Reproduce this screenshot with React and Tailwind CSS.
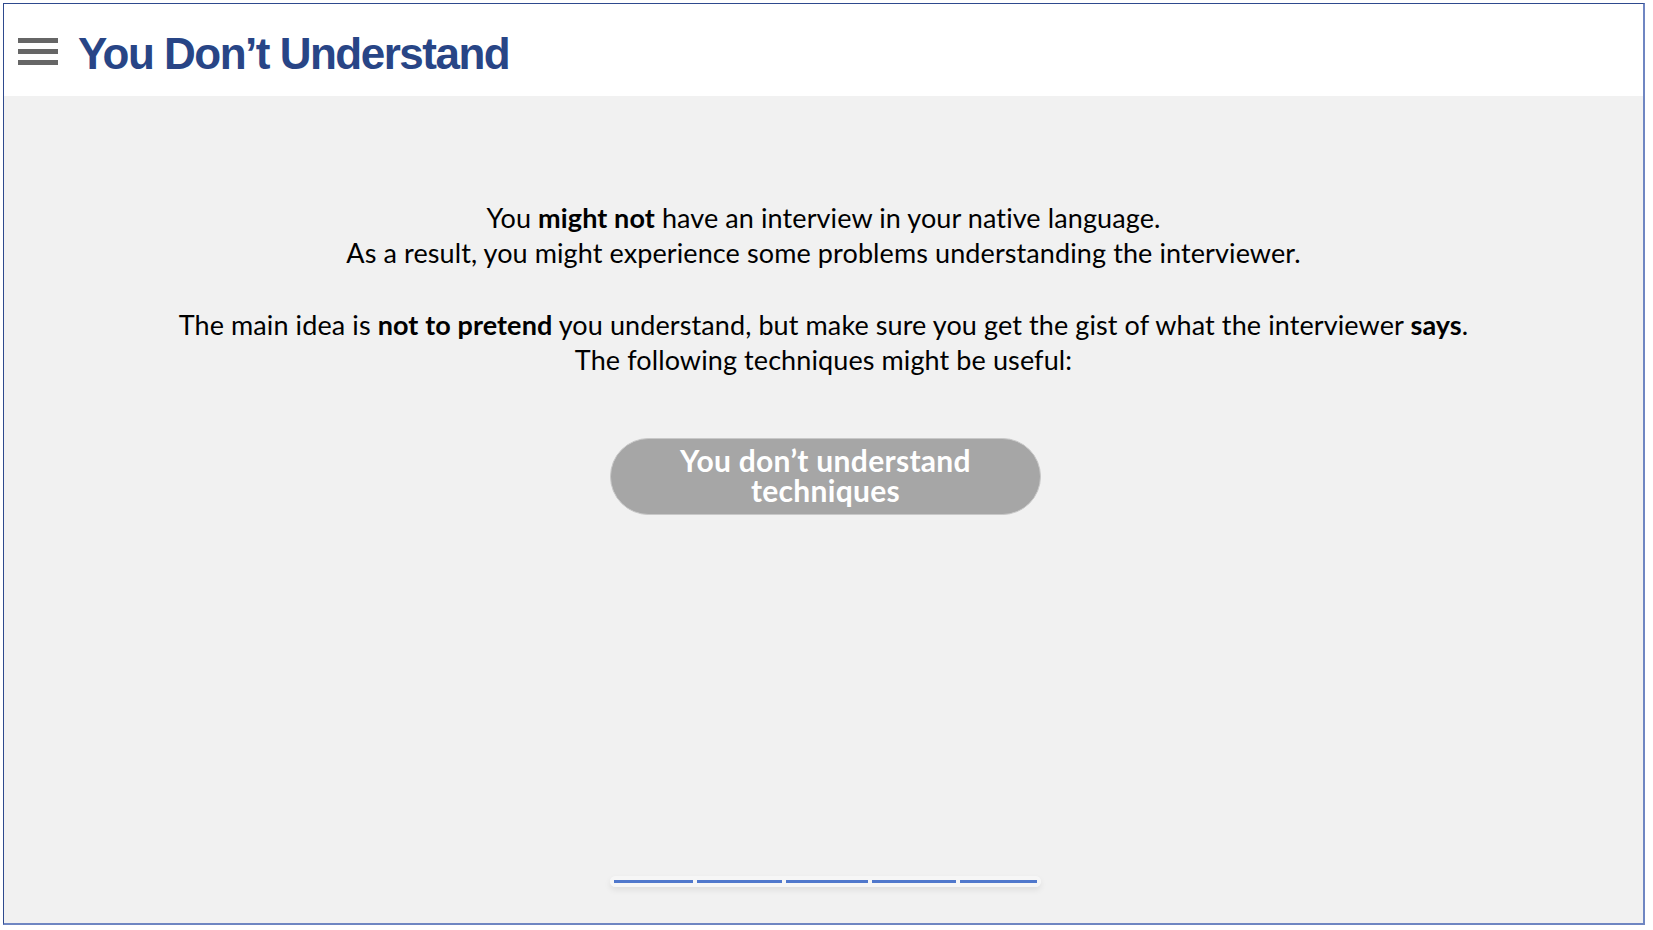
import React from 'react';

const segments = [79, 85, 82, 84, 77];

const App = () => {
    return (
        <div className="w-[1653px] h-[930px] bg-white pl-[3px] pt-[3px]">
            <div className="w-[1642px] h-[922px] flex flex-col border-l border-t border-r-2 border-b-2 border-l-[#2e4a8e] border-t-[#2e4a8e] border-r-[#6f86c2] border-b-[#6f86c2] overflow-hidden">

                {/* header */}
                <div className="h-[92px] flex-shrink-0 bg-white flex items-center pl-[14px] pt-[8px]">
                    <div className="w-[40px] mb-[6px] flex flex-col gap-[6px]">
                        <div className="h-[5px] bg-[#666666]" />
                        <div className="h-[5px] bg-[#666666]" />
                        <div className="h-[5px] bg-[#666666]" />
                    </div>
                    <h1
                        className="ml-[20px] text-[44px] font-bold tracking-[-1.5px] text-[#284586] leading-none"
                        style={{ fontFamily: '"Liberation Sans", Arial, sans-serif' }}
                    >
                        You Don’t Understand
                    </h1>
                </div>

                {/* content */}
                <div
                    className="flex-1 flex flex-col items-center bg-[#f1f1f1] pt-[104px] text-black"
                    style={{ fontFamily: 'Lato, "Open Sans", sans-serif' }}
                >
                    <div className="text-center text-[27px] leading-[35px] tracking-[0.1px]">
                        <p>You <b>might not</b> have an interview in your native language.</p>
                        <p>As a result, you might experience some problems understanding the interviewer.</p>
                        <p className="mt-[37px]">
                            The main idea is <b>not to pretend</b> you understand, but make sure you get the gist of what the interviewer <b>says</b>.
                        </p>
                        <p>The following techniques might be useful:</p>
                    </div>

                    <button className="mt-[61px] ml-[4px] w-[431px] h-[77px] pb-[4px] rounded-full bg-[#a6a6a6] border border-[#c8c8c8] text-white font-bold text-[30px] leading-[30px] tracking-[0.3px] px-10">
                        You don’t understand techniques
                    </button>

                    <div className="mt-auto mb-[36px] ml-[4px] flex gap-[4px] px-[4px] py-[4px] rounded-md bg-white/40 shadow-[0_3px_6px_rgba(0,0,0,0.08)]">
                        {segments.map((w, i) => (
                            <div key={i} className="h-[3px] bg-[#5078cc]" style={{ width: w }} />
                        ))}
                    </div>
                </div>
            </div>
        </div>
    );
};

export default App;
